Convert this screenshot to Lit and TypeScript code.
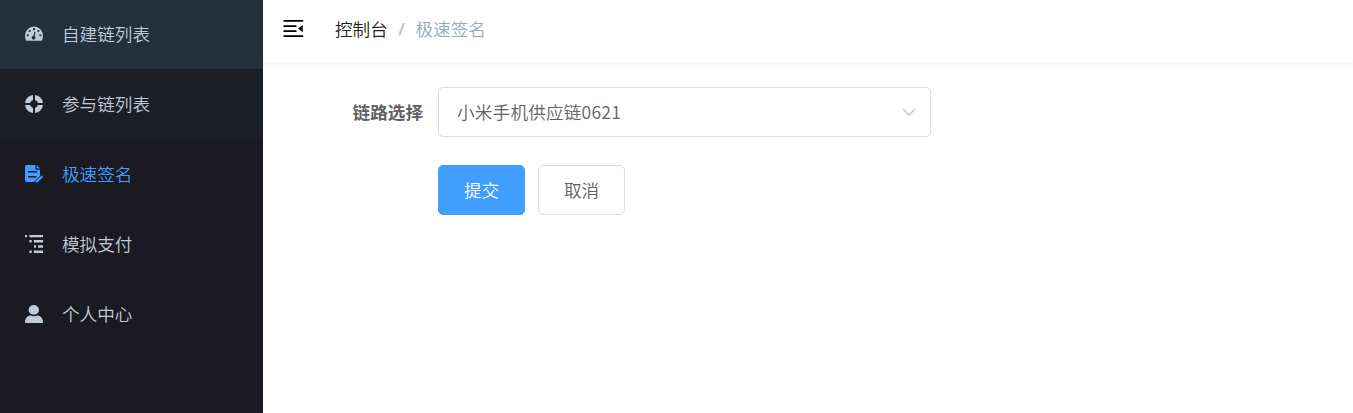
import { LitElement, html, css, svg } from "lit";
import { customElement } from "lit/decorators.js";
import { classMap } from "lit/directives/class-map.js";

const icons = {
  dashboard: svg`<path fill-rule="evenodd" d="M9 1.500a9 9 0 0 1 9 9c0 1.700-.3 3.200-.8 4.500-.2.500-.5.800-1 .8H1.800c-.5 0-.8-.3-1-.8A12 12 0 0 1 0 10.500a9 9 0 0 1 9-9ZM3.800 10.300a1.100 1.100 0 1 0-2.200 0 1.100 1.100 0 0 0 2.200 0ZM5.700 6a1.100 1.100 0 1 0-2.200 0 1.100 1.100 0 0 0 2.200 0ZM10.100 4.200a1.100 1.100 0 1 0-2.200 0 1.100 1.100 0 0 0 2.200 0ZM14.500 6a1.100 1.100 0 1 0-2.200 0 1.100 1.100 0 0 0 2.200 0ZM16.400 10.300a1.100 1.100 0 1 0-2.200 0 1.100 1.100 0 0 0 2.200 0ZM10.500 6.900 9.500 6.700 8.500 10.800a1.900 1.900 0 1 0 1.200.3Z"/>`,
  ring: svg`<path d="M8 0v5.100A4.100 4.100 0 0 0 5.100 8H0A9 9 0 0 1 8 0ZM10 0a9 9 0 0 1 8 8h-5.100A4.100 4.100 0 0 0 10 5.100ZM18 10a9 9 0 0 1-8 8v-5.100a4.100 4.100 0 0 0 2.900-2.900ZM8 18a9 9 0 0 1-8-8h5.100A4.100 4.100 0 0 0 8 12.900Z"/>`,
  sign: svg`<path fill-rule="evenodd" d="M2 0h8.400v3.200c0 1 .6 1.600 1.600 1.600h3v6.100l-6 6.100H2a2 2 0 0 1-2-2V2C0 .8.800 0 2 0ZM3 6v1.500h9V6ZM3 11v1.500h8.500V11ZM11.600 0 15 3.500h-2.500c-.6 0-.9-.3-.9-.9Z"/><path d="M16.500 10.200 18.500 12l-5.700 5.400-2.800.8.700-2.500Z" stroke="#1b1a22" stroke-width=".6"/>`,
  tree: svg`<path d="M0 0h2v2.200H0ZM4.400 0H18v2.300H4.400ZM4.400 5h2.300v2.600H4.400ZM8.800 5H18v2.600H8.800ZM9 10.200h2v2.600H9ZM13 10.200h5v2.600h-5ZM4.400 15.600h2.300V18H4.400ZM8.800 15.600H18V18H8.800Z"/>`,
  user: svg`<ellipse cx="8.800" cy="4.900" rx="5.200" ry="4.900"/><path d="M0 17c0-3.800 2.600-6.500 6-6.500.9.600 1.900.8 3 .8s2.100-.2 3-.8c3.400 0 6 2.700 6 6.500 0 .6-.4 1-1 1H1c-.6 0-1-.4-1-1Z"/>`,
};

const items = [
  { icon: icons.dashboard, label: "自建链列表", state: "hover" },
  { icon: icons.ring, label: "参与链列表", state: "fading" },
  { icon: icons.sign, label: "极速签名", state: "active" },
  { icon: icons.tree, label: "模拟支付", state: "" },
  { icon: icons.user, label: "个人中心", state: "" },
];

@customElement("app-root")
export class AppRoot extends LitElement {
  static styles = css`
    :host {
      display: flex;
      height: 100vh;
      overflow: hidden;
      background: #fff;
      font: 350 17.6px/24px "Noto Sans CJK SC", sans-serif;
      color: #606266;
    }
    * { box-sizing: border-box; }
    .sidebar {
      flex: 0 0 263px;
      background: #1b1a22;
      color: #bfcbd9;
    }
    .item {
      display: flex;
      align-items: center;
      gap: 19px;
      height: 70px;
      padding-left: 25px;
    }
    .item:first-child { margin-top: -1px; }
    .item svg { width: 18px; height: 18px; fill: currentColor; overflow: visible; }
    .hover { background: #25303f; }
    .fading { background: #1c1f27; }
    .active { color: #409eff; }
    .main { flex: 1; min-width: 0; }
    .navbar {
      display: flex;
      align-items: center;
      height: 62px;
      padding: 0 0 4px 20px;
      box-shadow: 0 1px 5px rgba(0, 21, 41, 0.08);
    }
    .toggle { width: 21px; height: 18px; margin-right: 31px; }
    .crumb { color: #1f2023; }
    .sep { margin: 0 10.5px; color: #c0c4cc; font-family: "Noto Sans", sans-serif; font-size: 16px; font-weight: 700; }
    .last { color: #97a8be; }
    .form { padding: 25px 0 0 75px; }
    .row { display: flex; align-items: center; }
    .label { width: 100px; padding-right: 15px; text-align: right; font-weight: 700; white-space: nowrap; }
    .select {
      display: flex;
      align-items: center;
      justify-content: space-between;
      width: 493px;
      height: 50px;
      padding: 0 14px 0 18px;
      border: 1px solid #dcdfe6;
      border-radius: 5px;
    }
    .value { letter-spacing: 0.2px; }
    .arrow { width: 14px; height: 8px; }
    .actions { display: flex; gap: 13px; padding: 28px 0 0 100px; }
    button {
      width: 87px;
      height: 50px;
      padding: 0 0 1px;
      border: 1px solid #dcdfe6;
      border-radius: 5px;
      background: #fff;
      color: #606266;
      font: inherit;
    }
    .primary { border-color: #409eff; background: #409eff; color: #fff; }
  `;

  render() {
    return html`
      <nav class="sidebar">
        ${items.map(
          (i) => html`<div class=${classMap({ item: true, hover: i.state === "hover", fading: i.state === "fading", active: i.state === "active" })}>
            <svg viewBox="0 0 18 18">${i.icon}</svg><span>${i.label}</span>
          </div>`
        )}
      </nav>
      <div class="main">
        <header class="navbar">
          <svg class="toggle" viewBox="0 0 21 18">
            <path d="M.5 0h19.700v1.800H.5ZM.5 5.200h13V7H.5ZM.5 10.200h13V12H.5ZM.5 15.200h19.700V17H.5ZM19.800 5v7.200L15 8.600Z" />
          </svg>
          <span class="crumb">控制台</span><span class="sep">/</span><span class="last">极速签名</span>
        </header>
        <main class="form">
          <div class="row">
            <label class="label">链路选择</label>
            <div class="select">
              <span class="value">小米手机供应链0621</span>
              <svg class="arrow" viewBox="0 0 14 8"><path d="m1 1 6 6 6-6" fill="none" stroke="#c0c4cc" stroke-width="1.300" /></svg>
            </div>
          </div>
          <div class="actions">
            <button class="primary">提交</button>
            <button>取消</button>
          </div>
        </main>
      </div>
    `;
  }
}
